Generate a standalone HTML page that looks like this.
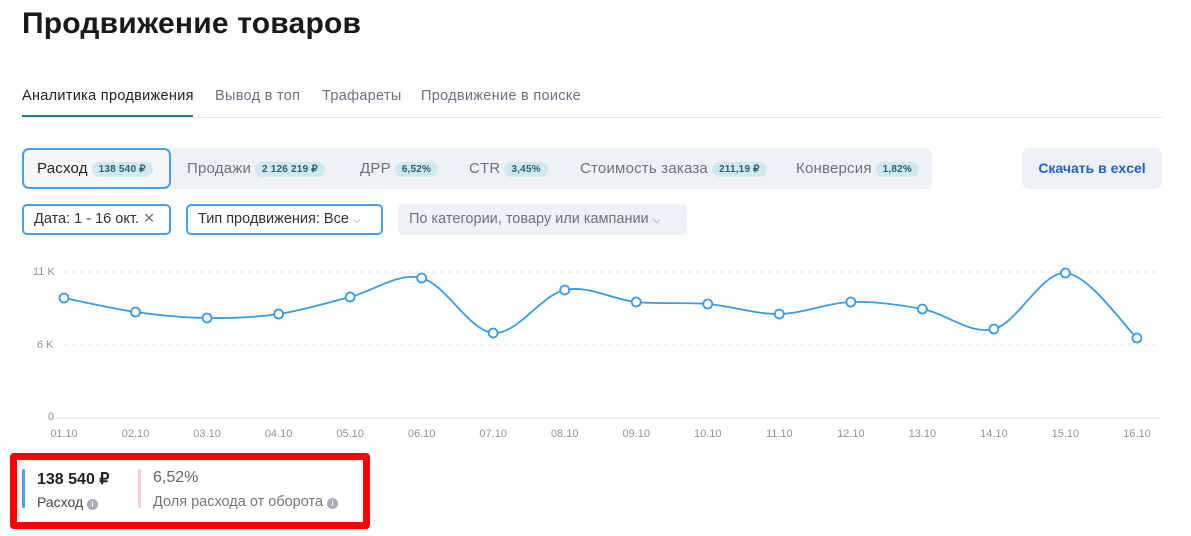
<!DOCTYPE html>
<html><head><meta charset="utf-8"><style>
*{box-sizing:border-box;margin:0;padding:0}
body{width:1191px;height:536px;background:#fff;font-family:"Liberation Sans",sans-serif;color:#1f2937;position:relative;overflow:hidden}
.a{position:absolute;white-space:nowrap}
h1{position:absolute;left:22px;top:7px;font-size:30px;font-weight:700;color:#1a1a1a;letter-spacing:0.2px}
.tab{position:absolute;top:88px;font-size:14.5px;color:#6b7280;letter-spacing:0.3px}
.pill{display:inline-block;background:#cfe9ee;color:#2a6070;border-radius:9px;font-size:10px;font-weight:700;padding:2px 7px;margin-left:4px;vertical-align:1px}
.seg{position:absolute;top:160px;font-size:15px;color:#6b7280;letter-spacing:0.2px}
.btn{position:absolute;height:31px;border:2px solid #4a9ee6;border-radius:5px;font-size:14.5px;color:#333;padding:5px 10px;background:#fff}
.ax{position:absolute;font-size:11px;color:#8a94a0}
</style></head><body>
<h1>Продвижение товаров</h1>
<div class="tab a" style="left:22px;color:#222">Аналитика продвижения</div>
<div class="a" style="left:22px;top:115px;width:171px;height:2px;background:#2c7a8c"></div>
<div class="a" style="left:22px;top:117px;width:1140px;height:1px;background:#e5e7eb"></div>
<div class="tab a" style="left:215px">Вывод в топ</div>
<div class="tab a" style="left:322px">Трафареты</div>
<div class="tab a" style="left:421px">Продвижение в поиске</div>

<div class="a" style="left:22px;top:148px;width:910px;height:41px;background:#eef1f5;border-radius:7px"></div>
<div class="a" style="left:22px;top:148px;width:149px;height:41px;border:2px solid #4a9ee6;border-radius:7px;background:#f4f6f8"></div>
<div class="seg a" style="left:37px;color:#222">Расход<span class="pill">138 540 ₽</span></div>
<div class="seg a" style="left:187px">Продажи<span class="pill">2 126 219 ₽</span></div>
<div class="seg a" style="left:360px">ДРР<span class="pill">6,52%</span></div>
<div class="seg a" style="left:469px">CTR<span class="pill">3,45%</span></div>
<div class="seg a" style="left:580px">Стоимость заказа<span class="pill">211,19 ₽</span></div>
<div class="seg a" style="left:796px">Конверсия<span class="pill">1,82%</span></div>
<div class="a" style="left:1022px;top:148px;width:140px;height:41px;background:#eef1f5;border-radius:7px;color:#1f5fd6;font-size:14px;font-weight:700;text-align:center;line-height:41px">Скачать в excel</div>

<div class="btn a" style="left:22px;top:204px;width:149px">Дата: 1 - 16 окт. <span style="color:#777">✕</span></div>
<div class="btn a" style="left:186px;top:204px;width:197px">Тип продвижения: Все <span style="color:#777;font-size:10px">⌵</span></div>
<div class="a" style="left:398px;top:204px;width:289px;height:31px;background:#eef1f5;border-radius:5px;font-size:14.5px;color:#6b7280;padding:7px 11px">По категории, товару или кампании <span style="font-size:10px">⌵</span></div>

<div class="ax" style="left:33px;top:266px">11 K</div>
<div class="ax" style="left:37px;top:339px">6 K</div>
<div class="ax" style="left:48px;top:411px">0</div>
<svg class="a" style="left:0;top:0" width="1191" height="536">
<line x1="64" x2="1160" y1="272" y2="272" stroke="#e3e6ea" stroke-dasharray="4 4"/>
<line x1="64" x2="1160" y1="345" y2="345" stroke="#e3e6ea" stroke-dasharray="4 4"/>
<line x1="56" x2="1160" y1="418" y2="418" stroke="#d8dce0"/>
<path id="ln" fill="none" stroke="#3d9be0" stroke-width="1.8"/>
<g id="pts"></g>
</svg>
<div id="xl"></div>

<div class="a" style="left:10px;top:453px;width:360px;height:76px;border:7px solid #f00;border-radius:4px"></div>
<div class="a" style="left:22px;top:469px;width:3px;height:39px;background:#4a9ee6;border-radius:2px"></div>
<div class="a" style="left:37px;top:469px;font-size:16px;font-weight:700;color:#222">138 540 ₽</div>
<div class="a" style="left:37px;top:494px;font-size:14px;color:#444">Расход <span style="display:inline-block;width:11px;height:11px;border-radius:50%;background:#a8adb3;color:#fff;font-size:8px;text-align:center;line-height:11px;font-weight:700">i</span></div>
<div class="a" style="left:138px;top:469px;width:3px;height:39px;background:#f8cfd8;border-radius:2px"></div>
<div class="a" style="left:153px;top:469px;font-size:16px;color:#666">6,52%</div>
<div class="a" style="left:153px;top:494px;font-size:14.5px;color:#777">Доля расхода от оборота <span style="display:inline-block;width:11px;height:11px;border-radius:50%;background:#a8adb3;color:#fff;font-size:8px;text-align:center;line-height:11px;font-weight:700">i</span></div>
<script>
var ys=[298,312,318,314,297,278,333,290,302,304,314,302,309,329,273,338];
var p=ys.map(function(y,i){return [64+i*71.53,y]});
var d="M"+p[0][0]+","+p[0][1];
for(var i=0;i<p.length-1;i++){var a=p[i-1]||p[i],b=p[i],c=p[i+1],e=p[i+2]||c;
d+=" C"+(b[0]+(c[0]-a[0])/6)+","+(b[1]+(c[1]-a[1])/6)+" "+(c[0]-(e[0]-b[0])/6)+","+(c[1]-(e[1]-b[1])/6)+" "+c[0]+","+c[1];}
document.getElementById("ln").setAttribute("d",d);
var g="",xl="";
p.forEach(function(q,i){g+='<circle cx="'+q[0]+'" cy="'+q[1]+'" r="4.5" fill="#fff" stroke="#3d9be0" stroke-width="1.8"/>';
xl+='<div class="ax" style="left:'+(q[0]-15)+'px;top:428px;width:30px;text-align:center">'+(i<9?"0":"")+(i+1)+'.10</div>';});
document.getElementById("pts").innerHTML=g;document.getElementById("xl").innerHTML=xl;
</script>
</body></html>
